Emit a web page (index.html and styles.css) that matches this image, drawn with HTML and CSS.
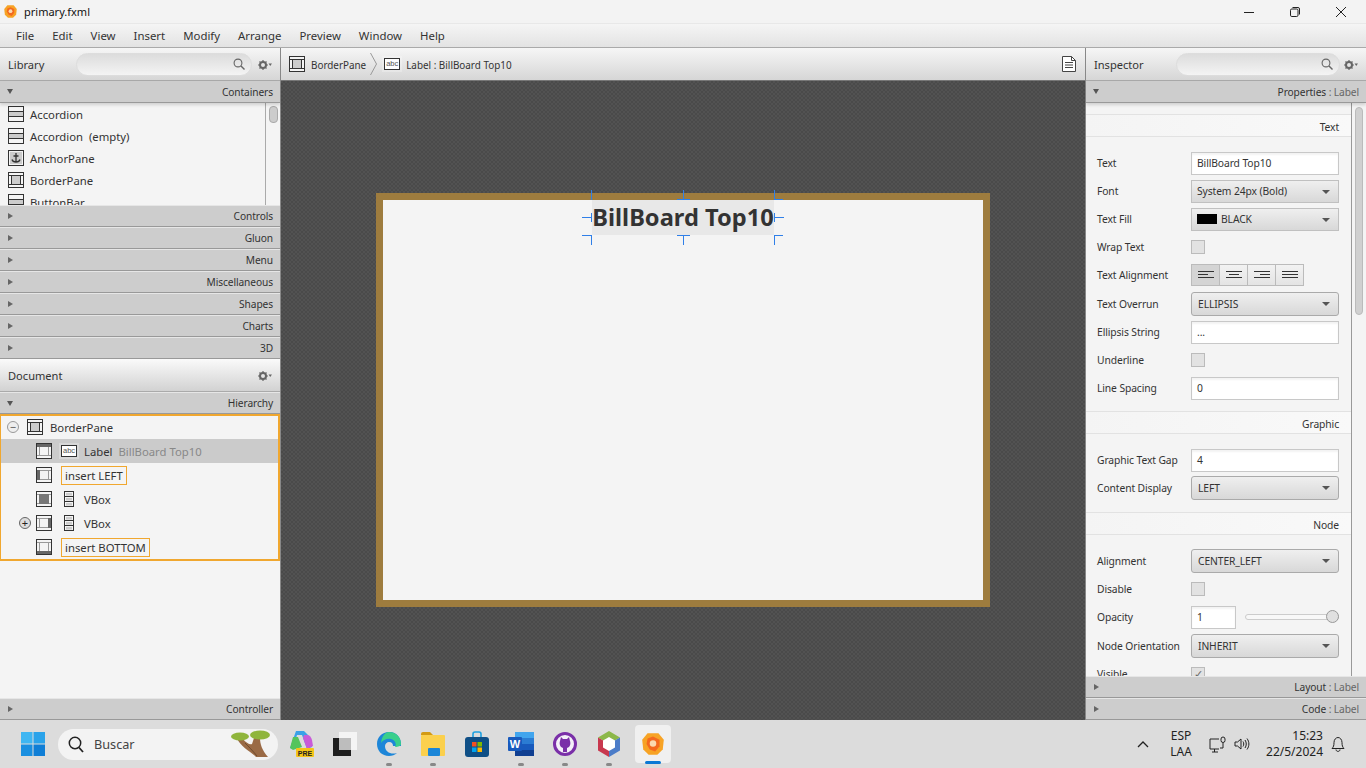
FILE: index.html
```html
<!DOCTYPE html>
<html lang="es">
<head>
    <meta charset="UTF-8">
    <title>primary.fxml</title>
    <link rel="stylesheet" href="styles.css">
</head>
<body>

    <svg class="defs" width="0" height="0">
        <symbol id="i-accordion" viewBox="0 0 16 16">
            <rect x="0.5" y="0.5" width="15" height="15" fill="#f4f4f4" stroke="#333"/>
            <path d="M1 5.5h14M1 10.5h14" stroke="#333" fill="none"/>
            <rect x="1" y="6" width="14" height="4" fill="#ccc"/>
        </symbol>
        <symbol id="i-anchor" viewBox="0 0 16 16">
            <rect x="0.5" y="0.5" width="15" height="15" fill="#f4f4f4" stroke="#333"/>
            <rect x="2" y="2" width="12" height="12" fill="#ccc"/>
            <path d="M8 3v9M5.500 6h5M4 9.500c.5 2 2 2.500 4 2.500s3.500-.5 4-2.500" stroke="#333" stroke-width="1.300" fill="none"/>
        </symbol>
        <symbol id="i-border" viewBox="0 0 16 16">
            <rect x="0.5" y="0.5" width="15" height="15" fill="#f4f4f4" stroke="#333"/>
            <path d="M1 3.500h14M1 12.500h14M3.500 3.500v9M12.500 3.500v9" stroke="#333" fill="none"/>
            <rect x="4" y="4" width="8" height="8" fill="#ccc"/>
        </symbol>
        <symbol id="i-top" viewBox="0 0 16 16">
            <rect x="0.5" y="0.5" width="15" height="15" fill="#f4f4f4" stroke="#333"/>
            <path d="M3.500 3.500v9M12.500 3.500v9M1 12.500h14" stroke="#999" fill="none"/>
            <rect x="1" y="1" width="14" height="3" fill="#666"/>
        </symbol>
        <symbol id="i-left" viewBox="0 0 16 16">
            <rect x="0.5" y="0.5" width="15" height="15" fill="#f4f4f4" stroke="#333"/>
            <path d="M1 3.500h14M1 12.500h14M12.500 3.500v9" stroke="#999" fill="none"/>
            <rect x="1" y="3" width="3" height="10" fill="#666"/>
        </symbol>
        <symbol id="i-center" viewBox="0 0 16 16">
            <rect x="0.5" y="0.5" width="15" height="15" fill="#f4f4f4" stroke="#333"/>
            <path d="M1 3.500h14M1 12.500h14M3.500 3.500v9M12.500 3.500v9" stroke="#999" fill="none"/>
            <rect x="3" y="3" width="10" height="10" fill="#777"/>
        </symbol>
        <symbol id="i-right" viewBox="0 0 16 16">
            <rect x="0.5" y="0.5" width="15" height="15" fill="#f4f4f4" stroke="#333"/>
            <path d="M1 3.500h14M1 12.500h14M3.500 3.500v9" stroke="#999" fill="none"/>
            <rect x="12" y="3" width="3" height="10" fill="#666"/>
        </symbol>
        <symbol id="i-bottom" viewBox="0 0 16 16">
            <rect x="0.5" y="0.5" width="15" height="15" fill="#f4f4f4" stroke="#333"/>
            <path d="M1 3.500h14M3.500 3.500v9M12.500 3.500v9" stroke="#999" fill="none"/>
            <rect x="1" y="12" width="14" height="3" fill="#666"/>
        </symbol>
        <symbol id="i-vbox" viewBox="0 0 10 16">
            <rect x="0.5" y="0.5" width="9" height="15" fill="#f4f4f4" stroke="#333"/>
            <path d="M1 5.500h8M1 10.500h8" stroke="#333" fill="none"/>
            <rect x="2" y="2" width="6" height="2.500" fill="#ccc"/>
            <rect x="2" y="7" width="6" height="2.500" fill="#ccc"/>
            <rect x="2" y="12" width="6" height="2.500" fill="#ccc"/>
        </symbol>
        <symbol id="i-gear" viewBox="0 0 14 10">
            <circle cx="5" cy="5" r="3" fill="none" stroke="#666" stroke-width="2"/>
            <path d="M5 0v2M5 8v2M0 5h2M8 5h2M1.500 1.500l1.400 1.400M7.100 7.100l1.400 1.400M1.500 8.500l1.400-1.400M7.100 2.900l1.400-1.400" stroke="#666" stroke-width="1.200"/>
            <path d="M10.500 3.500h3.500l-1.750 2.500z" fill="#666"/>
        </symbol>
        <symbol id="i-search" viewBox="0 0 12 12">
            <circle cx="5" cy="5" r="3.900" fill="none" stroke="#666" stroke-width="1.100"/>
            <path d="M8 8l3.500 3.500" stroke="#666" stroke-width="1.400"/>
        </symbol>
        <symbol id="i-abc" viewBox="0 0 16 12">
            <rect x="0.5" y="0.5" width="15" height="11" fill="#fff" stroke="#333"/>
        </symbol>
        <symbol id="i-builder" viewBox="0 0 24 24">
            <path d="M7 2h10l5 6-1 9-5 5H8l-5-5-1-9z" fill="#f7a325"/>
            <path d="M7 7l5-2 6 3 0 6-4 5-5-2-3-5z" fill="#f4691e"/>
            <circle cx="12" cy="11.500" r="3" fill="#fbd9b0"/>
        </symbol>
    </svg>

    <div class="titlebar">
        <svg class="title-logo"><use href="#i-builder"/></svg>
        <span class="title-name">primary.fxml</span>
        <div class="window-btns">
            <svg width="12" height="12" viewBox="0 0 12 12"><path d="M1 6.500h10" stroke="#222"/></svg>
            <svg width="12" height="12" viewBox="0 0 12 12"><rect x="1.500" y="3" width="7.500" height="7.500" rx="1.300" fill="none" stroke="#222"/><path d="M3.500 1.500h5.500a1.500 1.500 0 0 1 1.500 1.500v5.500" fill="none" stroke="#222"/></svg>
            <svg width="12" height="12" viewBox="0 0 12 12"><path d="M1 1l10 10M11 1L1 11" stroke="#222"/></svg>
        </div>
    </div>

    <div class="menubar">
        <span>File</span><span>Edit</span><span>View</span><span>Insert</span><span>Modify</span><span>Arrange</span><span>Preview</span><span>Window</span><span>Help</span>
    </div>

    <div class="workspace">

        <div class="side left-side">
            <div class="panel-head">
                <span class="panel-name">Library</span>
                <div class="search-field"><svg class="search-ico"><use href="#i-search"/></svg></div>
                <svg class="gear"><use href="#i-gear"/></svg>
            </div>
            <div class="pane-title open"><i class="arrow-down"></i><span>Containers</span></div>
            <div class="lib-list">
                <div class="lib-items">
                    <div class="lib-item"><svg class="ico"><use href="#i-accordion"/></svg>Accordion</div>
                    <div class="lib-item"><svg class="ico"><use href="#i-accordion"/></svg>Accordion&nbsp; (empty)</div>
                    <div class="lib-item"><svg class="ico"><use href="#i-anchor"/></svg>AnchorPane</div>
                    <div class="lib-item"><svg class="ico"><use href="#i-border"/></svg>BorderPane</div>
                    <div class="lib-item"><svg class="ico"><use href="#i-accordion"/></svg>ButtonBar</div>
                </div>
                <div class="lib-scroll"><div class="lib-thumb"></div></div>
            </div>
            <div class="pane-title"><i class="arrow-right"></i><span>Controls</span></div>
            <div class="pane-title"><i class="arrow-right"></i><span>Gluon</span></div>
            <div class="pane-title"><i class="arrow-right"></i><span>Menu</span></div>
            <div class="pane-title"><i class="arrow-right"></i><span>Miscellaneous</span></div>
            <div class="pane-title"><i class="arrow-right"></i><span>Shapes</span></div>
            <div class="pane-title"><i class="arrow-right"></i><span>Charts</span></div>
            <div class="pane-title"><i class="arrow-right"></i><span>3D</span></div>

            <div class="panel-head doc-head">
                <span class="panel-name">Document</span>
                <svg class="gear"><use href="#i-gear"/></svg>
            </div>
            <div class="pane-title"><i class="arrow-down"></i><span>Hierarchy</span></div>
            <div class="tree">
                <div class="tree-row root-row"><i class="toggle">&minus;</i><svg class="ico"><use href="#i-border"/></svg><span class="tree-text">BorderPane</span></div>
                <div class="tree-row selected"><i class="slot"></i><svg class="ico"><use href="#i-top"/></svg><span class="abc-ico"><svg class="abc-box" viewBox="0 0 16 12"><use href="#i-abc"/></svg><b>abc</b></span><span class="tree-text">Label</span><span class="tree-sub">BillBoard Top10</span></div>
                <div class="tree-row"><i class="slot"></i><svg class="ico"><use href="#i-left"/></svg><span class="insert">insert LEFT</span></div>
                <div class="tree-row"><i class="slot"></i><svg class="ico"><use href="#i-center"/></svg><svg class="vbox"><use href="#i-vbox"/></svg><span class="tree-text">VBox</span></div>
                <div class="tree-row"><i class="toggle plus">+</i><svg class="ico"><use href="#i-right"/></svg><svg class="vbox"><use href="#i-vbox"/></svg><span class="tree-text">VBox</span></div>
                <div class="tree-row"><i class="slot"></i><svg class="ico"><use href="#i-bottom"/></svg><span class="insert">insert BOTTOM</span></div>
            </div>
            <div class="side-fill"></div>
            <div class="pane-title"><i class="arrow-right"></i><span>Controller</span></div>
        </div>

        <div class="center">
            <div class="breadcrumb">
                <svg class="ico"><use href="#i-border"/></svg>
                <span class="crumb">BorderPane</span>
                <svg class="crumb-sep" width="7" height="24" viewBox="0 0 7 24"><path d="M.5 1l6 11-6 11" fill="none" stroke="#999"/></svg>
                <span class="abc-ico"><svg class="abc-box" viewBox="0 0 16 12"><use href="#i-abc"/></svg><b>abc</b></span>
                <span class="crumb">Label : BillBoard Top10</span>
                <svg class="doc-ico" width="14" height="16" viewBox="0 0 14 16"><path d="M.5.5h9l4 4v11H.5z" fill="#fff" stroke="#444"/><path d="M9.500.5v4h4M3 6.500h8M3 9h8M3 11.500h8" fill="none" stroke="#444"/></svg>
            </div>
            <div class="canvas">
                <div class="stage">
                    <div class="stage-inner">
                        <div class="stage-label">BillBoard Top10</div>
                        <svg class="handles" width="206" height="60" viewBox="0 0 206 60">
                            <path d="M11.500 2v10M103.500 2v9M97 11.500h13M194.500 2v10M194 11.500h9M2 29.500h10M11.500 25v9M194 29.500h10M194.500 25v9M2 47.500h10M11.500 47v10M97 47.500h13M103.500 47v10M194.500 47v10M194 47.500h9" fill="none" stroke="#2f7fe8"/>
                        </svg>
                    </div>
                </div>
            </div>
        </div>

        <div class="side right-side">
            <div class="panel-head">
                <span class="panel-name">Inspector</span>
                <div class="search-field insp-search"><svg class="search-ico"><use href="#i-search"/></svg></div>
                <svg class="gear"><use href="#i-gear"/></svg>
            </div>
            <div class="pane-title open"><i class="arrow-down"></i><span>Properties <em>: Label</em></span></div>
            <div class="insp-body">
                <div class="insp-scroll-area">
                    <div class="section-title first">Text</div>
                    <div class="prop-group">
                        <div class="prop"><label>Text</label><div class="field">BillBoard Top10</div></div>
                        <div class="prop"><label>Font</label><div class="combo flat">System 24px (Bold)</div></div>
                        <div class="prop"><label>Text Fill</label><div class="combo flat"><i class="swatch"></i>BLACK</div></div>
                        <div class="prop"><label>Wrap Text</label><i class="check"></i></div>
                        <div class="prop"><label>Text Alignment</label>
                            <div class="align-btns">
                                <div class="align-btn on"><svg width="16" height="8" viewBox="0 0 16 8"><path d="M0 .5h16M0 3.500h10M0 6.500h16" stroke="#333"/></svg></div>
                                <div class="align-btn"><svg width="16" height="8" viewBox="0 0 16 8"><path d="M0 .5h16M3 3.500h10M0 6.500h16" stroke="#333"/></svg></div>
                                <div class="align-btn"><svg width="16" height="8" viewBox="0 0 16 8"><path d="M0 .5h16M6 3.500h10M0 6.500h16" stroke="#333"/></svg></div>
                                <div class="align-btn"><svg width="16" height="8" viewBox="0 0 16 8"><path d="M0 .5h16M0 3.500h16M0 6.500h16" stroke="#333"/></svg></div>
                            </div>
                        </div>
                        <div class="prop shift"><label>Text Overrun</label><div class="combo">ELLIPSIS</div></div>
                        <div class="prop"><label>Ellipsis String</label><div class="field">...</div></div>
                        <div class="prop"><label>Underline</label><i class="check"></i></div>
                        <div class="prop"><label>Line Spacing</label><div class="field">0</div></div>
                    </div>
                    <div class="section-title">Graphic</div>
                    <div class="prop-group roomy">
                        <div class="prop"><label>Graphic Text Gap</label><div class="field">4</div></div>
                        <div class="prop"><label>Content Display</label><div class="combo">LEFT</div></div>
                    </div>
                    <div class="section-title">Node</div>
                    <div class="prop-group">
                        <div class="prop"><label>Alignment</label><div class="combo">CENTER_LEFT</div></div>
                        <div class="prop"><label>Disable</label><i class="check"></i></div>
                        <div class="prop"><label>Opacity</label><div class="field small">1</div><div class="slider"><i class="knob"></i></div></div>
                        <div class="prop shift"><label>Node Orientation</label><div class="combo">INHERIT</div></div>
                        <div class="prop"><label>Visible</label><i class="check checked">&#10003;</i></div>
                    </div>
                </div>
                <div class="insp-scroll"><div class="insp-thumb"></div></div>
            </div>
            <div class="pane-title"><i class="arrow-right"></i><span>Layout <em>: Label</em></span></div>
            <div class="pane-title"><i class="arrow-right"></i><span>Code <em>: Label</em></span></div>
        </div>
    </div>

    <div class="taskbar">
        <svg class="start" width="24" height="24" viewBox="0 0 24 24">
            <rect x="0" y="0" width="11.500" height="11.500" fill="#3fb6f2"/>
            <rect x="12.500" y="0" width="11.500" height="11.500" fill="#2aa3ea"/>
            <rect x="0" y="12.500" width="11.500" height="11.500" fill="#1a8fe0"/>
            <rect x="12.500" y="12.500" width="11.500" height="11.500" fill="#0f7ed6"/>
        </svg>
        <div class="task-search">
            <svg width="16" height="17" viewBox="0 0 16 17"><circle cx="7" cy="7" r="5.700" fill="none" stroke="#222" stroke-width="1.500"/><path d="M11 11.500l4 4.500" stroke="#222" stroke-width="1.800"/></svg>
            <span>Buscar</span>
            <svg class="search-tree" width="40" height="28" viewBox="0 0 40 28">
                <path d="M7 9h6c3 4 7 6 9 5l2-6h6c0 6 2 12 8 19H26C22 22 14 20 7 9z" fill="#9a6a45"/>
                <path d="M15 13c4 4 7 7 12 13" fill="none" stroke="#6e4a2e"/>
                <ellipse cx="10" cy="6.500" rx="9" ry="4" fill="#8fb53c"/>
                <ellipse cx="30" cy="5" rx="10" ry="4.500" fill="#8fb53c"/>
            </svg>
        </div>
        <div class="task-icons">
            <div class="task-ico">
                <svg width="26" height="28" viewBox="0 0 26 28"><path d="M8 1h8l4 4 4 12-5 2-5-14H9L5 19l-3-1z" fill="#3aa1e8"/><path d="M5 7l5 0 4 10-9 3-3-2z" fill="#54c45c"/><path d="M16 5h3c3 0 4 2 5 5l1 6-6 3-4-11z" fill="#c95bd8"/><rect x="8" y="18" width="18" height="9" rx="1" fill="#f5c518"/><text x="17" y="25.500" class="pre">PRE</text></svg>
            </div>
            <div class="task-ico">
                <svg width="24" height="24" viewBox="0 0 24 24"><rect x="6" y="0" width="18" height="18" fill="#f4f4f4"/><rect x="0" y="6" width="18" height="18" fill="#1e1e1e"/><rect x="6" y="6" width="12" height="12" fill="#bdbdbd"/></svg>
            </div>
            <div class="task-ico dot">
                <svg width="26" height="26" viewBox="0 0 26 26"><path d="M13 1C6 1 1 6 1 13c0 7 5 12 12 12 3 0 6-1 8-3-6 2-12-1-12-7 0-2 2-4 4-4 3 0 4 2 4 4h8c1-8-5-14-11-14z" fill="#1d86d8"/><path d="M13 1c6 0 12 4 12 12 0 2-3 3-6 3 2-3 0-7-4-8-4-1-8 1-10 4C6 5 9 1 13 1z" fill="#39cf8b"/></svg>
            </div>
            <div class="task-ico dot">
                <svg width="26" height="24" viewBox="0 0 26 24"><path d="M1 2a2 2 0 0 1 2-2h7l3 3h-12z" fill="#d39a14"/><rect x="1" y="3" width="24" height="21" rx="1" fill="#fbd04d"/><rect x="8" y="16" width="12" height="8" rx="1" fill="#1b86d8"/></svg>
            </div>
            <div class="task-ico">
                <svg width="24" height="26" viewBox="0 0 24 26"><path d="M8 6V3a2 2 0 0 1 2-2h4a2 2 0 0 1 2 2v3" fill="none" stroke="#1da0e0" stroke-width="1.600"/><rect x="0" y="6" width="24" height="20" rx="3" fill="#0f4f86"/><rect x="7" y="11" width="4.500" height="4.500" fill="#f25022"/><rect x="12.500" y="11" width="4.500" height="4.500" fill="#7fba00"/><rect x="7" y="16.500" width="4.500" height="4.500" fill="#00a4ef"/><rect x="12.500" y="16.500" width="4.500" height="4.500" fill="#ffb900"/></svg>
            </div>
            <div class="task-ico dot">
                <svg width="26" height="24" viewBox="0 0 26 24"><rect x="7" y="0" width="19" height="24" rx="1" fill="#2b7cd3"/><rect x="7" y="0" width="19" height="6" fill="#41a5ee"/><rect x="7" y="12" width="19" height="6" fill="#185abd"/><rect x="7" y="18" width="19" height="6" fill="#103f91"/><rect x="0" y="5" width="14" height="14" rx="1" fill="#185abd"/><text x="7" y="16" class="word">W</text></svg>
            </div>
            <div class="task-ico dot">
                <svg width="24" height="26" viewBox="0 0 24 26"><circle cx="12" cy="13" r="10.500" fill="#f4f0f8" stroke="#7a2fa8" stroke-width="3"/><path d="M8 6l2 2h4l2-2 1 4c1 3 0 6-3 7v4h-4v-4c-3-1-4-4-3-7z" fill="#7a2fa8"/></svg>
            </div>
            <div class="task-ico dot">
                <svg width="24" height="26" viewBox="0 0 24 26"><path d="M12 0l11 6.500-11 6.500L1 6.500z" fill="#8cb84a"/><path d="M1 6.500v13L12 26V13z" fill="#c8384e"/><path d="M23 6.500v13L12 26V13z" fill="#4b7cc8"/><path d="M12 6l6 3.500v7L12 20l-6-3.500v-7z" fill="#fff"/></svg>
            </div>
            <div class="task-ico active">
                <svg width="26" height="28" viewBox="0 0 24 24"><use href="#i-builder"/></svg>
            </div>
        </div>
        <div class="tray">
            <svg class="tray-up" width="12" height="7" viewBox="0 0 12 7"><path d="M1 6l5-5 5 5" fill="none" stroke="#222" stroke-width="1.300"/></svg>
            <div class="lang">ESP<br>LAA</div>
            <svg class="tray-net" width="17" height="17" viewBox="0 0 17 17"><path d="M10 3H1v10h9M5.500 13v3M3 16h6" fill="none" stroke="#222"/><rect x="12" y="1" width="4" height="5.500" rx="2" fill="none" stroke="#222"/><path d="M14 7v5h-3" fill="none" stroke="#222"/></svg>
            <svg class="tray-vol" width="17" height="14" viewBox="0 0 17 14"><path d="M1 5h2.500L7 2v10L3.500 9H1z" fill="none" stroke="#222"/><path d="M9 4.500c1 1.500 1 3.500 0 5M11 3c1.700 2.500 1.700 5.500 0 8M13 1.500c2.500 3.500 2.500 7.500 0 11" fill="none" stroke="#222"/></svg>
            <div class="clock">15:23<br>22/5/2024</div>
            <svg class="tray-bell" width="14" height="16" viewBox="0 0 14 16"><path d="M1 12.500h12c-1.500-1.500-2-3-2-6 0-3-2-5-4-5s-4 2-4 5c0 3-.5 4.500-2 6zM5 13.500c0 2.500 4 2.500 4 0" fill="none" stroke="#222"/></svg>
        </div>
    </div>

</body>
</html>
```

FILE: styles.css
```css
body {
    margin: 0;
    width: 1366px;
    height: 768px;
    overflow: hidden;
    display: flex;
    flex-direction: column;
    font-family: "Noto Sans", sans-serif;
    font-size: 11.3px;
    color: #333;
    background-color: #f4f4f4;
}

.defs {
    position: absolute;
}

.titlebar {
    height: 24px;
    display: flex;
    align-items: center;
    background-color: #f3f3f3;
    border-bottom: 1px solid #e8e8e8;
    box-sizing: border-box;
    color: #111;
}

.title-logo {
    width: 15px;
    height: 15px;
    margin-left: 3px;
}

.title-name {
    margin-left: 6px;
    font-size: 11px;
}

.window-btns {
    margin-left: auto;
    display: flex;
    gap: 34px;
    padding-right: 19px;
}

.menubar {
    height: 24px;
    box-sizing: border-box;
    display: flex;
    align-items: center;
    gap: 18px;
    padding-left: 16px;
    background: linear-gradient(#f5f5f5, #e3e3e3);
    border-bottom: 1px solid #aaa;
    font-size: 11.4px;
}

.workspace {
    flex: 1;
    display: flex;
    min-height: 0;
}

.side {
    width: 281px;
    flex: none;
    display: flex;
    flex-direction: column;
    box-sizing: border-box;
    background-color: #f4f4f4;
}

.left-side {
    border-right: 1px solid #888;
}

.right-side {
    width: 280px;
}

.panel-head {
    height: 33px;
    flex: none;
    box-sizing: border-box;
    display: flex;
    align-items: center;
    padding-left: 8px;
    background: linear-gradient(#f6f6f6, #d6d6d6);
    border-bottom: 1px solid #aaa;
    position: relative;
}

.panel-name {
    font-size: 11.1px;
}

.search-field {
    position: absolute;
    left: 76px;
    top: 5px;
    width: 176px;
    height: 23px;
    box-sizing: border-box;
    border: 1px solid #ddd;
    border-radius: 12px;
    background: linear-gradient(#dcdcdc, #f4f4f4);
}

.insp-search {
    left: 90px;
    width: 164px;
}

.search-ico {
    position: absolute;
    right: 6px;
    top: 4px;
    width: 12px;
    height: 12px;
}

.gear {
    position: absolute;
    right: 8px;
    top: 12px;
    width: 14px;
    height: 10px;
}

.doc-head {
    background: linear-gradient(#fafafa, #d2d2d2);
}

.pane-title {
    height: 22px;
    flex: none;
    box-sizing: border-box;
    display: flex;
    align-items: center;
    justify-content: space-between;
    padding: 0 7px 0 7px;
    background-color: #cdcdcd;
    border-top: 1px solid #e6e6e6;
    border-bottom: 1px solid #999;
    font-size: 10.2px;
    letter-spacing: -0.1px;
}

.pane-title.open {
    box-shadow: 0 2px 3px rgba(0, 0, 0, 0.15);
    position: relative;
    border-top: none;
}

.pane-title em {
    font-style: normal;
    color: #666;
}

.arrow-down {
    width: 0;
    height: 0;
    border-left: 3.500px solid transparent;
    border-right: 3.500px solid transparent;
    border-top: 5px solid #555;
}

.arrow-right {
    width: 0;
    height: 0;
    margin-left: 1px;
    border-top: 3.500px solid transparent;
    border-bottom: 3.500px solid transparent;
    border-left: 5px solid #666;
}

.lib-list {
    height: 102px;
    flex: none;
    display: flex;
    overflow: hidden;
}

.lib-items {
    flex: 1;
    overflow: hidden;
    padding-left: 8px;
}

.lib-item {
    height: 22px;
    display: flex;
    align-items: center;
    gap: 6px;
}

.ico {
    width: 16px;
    height: 16px;
    flex: none;
}

.lib-scroll {
    width: 15px;
    flex: none;
    box-sizing: border-box;
    border-left: 1px solid #aaa;
    padding: 3px 0 0 3px;
}

.lib-thumb {
    width: 9px;
    height: 17px;
    box-sizing: border-box;
    border: 1px solid #aaa;
    border-radius: 4px;
    background-color: #ccc;
}

.tree {
    height: 147px;
    flex: none;
    box-sizing: border-box;
    border: 2px solid #f0a72f;
    border-left-width: 1px;
}

.tree-row {
    height: 24px;
    display: flex;
    align-items: center;
    padding-left: 18px;
}

.root-row {
    margin-top: -1px;
    padding-left: 6px;
}

.root-row .ico {
    margin-left: 8px;
}

.slot {
    width: 17px;
    flex: none;
}

.toggle {
    width: 12px;
    height: 12px;
    flex: none;
    box-sizing: border-box;
    border: 1px solid #999;
    border-radius: 50%;
    font-style: normal;
    font-size: 11px;
    line-height: 10px;
    text-align: center;
    color: #555;
    background-color: #eee;
}

.toggle.plus {
    margin-right: 5px;
    background-color: #ddd;
    border-color: #666;
    color: #222;
}

.tree-text {
    margin-left: 7px;
}

.vbox {
    width: 10px;
    height: 16px;
    margin-left: 12px;
    flex: none;
}

.vbox + .tree-text {
    margin-left: 10px;
}

.tree-row.selected {
    background-color: #cbcbcb;
}

.abc-ico {
    position: relative;
    width: 16px;
    height: 12px;
    flex: none;
    display: inline-block;
    box-shadow: 0 0 0 2px rgba(255, 255, 255, 0.25);
}

.selected .abc-ico {
    margin-left: 9px;
}

.abc-box {
    position: absolute;
    left: 0;
    top: 0;
    width: 16px;
    height: 12px;
}

.abc-ico b {
    position: absolute;
    left: 2px;
    top: 1px;
    font-weight: normal;
    font-family: "Liberation Sans", sans-serif;
    font-size: 7.500px;
    line-height: 10px;
    color: #555;
}

.tree-sub {
    margin-left: 6px;
    color: #888;
}

.insert {
    margin-left: 9px;
    height: 19px;
    box-sizing: border-box;
    border: 1px solid #f0a72f;
    padding: 0 3px;
    line-height: 17px;
}

.side-fill {
    flex: 1;
}

.center {
    flex: 1;
    min-width: 0;
    display: flex;
    flex-direction: column;
    border-right: 1px solid #888;
}

.breadcrumb {
    height: 33px;
    flex: none;
    box-sizing: border-box;
    display: flex;
    align-items: center;
    padding: 0 9px 0 8px;
    background: linear-gradient(#f6f6f6, #d6d6d6);
    border-bottom: 1px solid #777;
    font-size: 9.900px;
}

.crumb {
    margin-left: 6px;
    padding-top: 1px;
}

.crumb-sep {
    margin: 0 7px 0 4px;
}

.doc-ico {
    margin-left: auto;
}

.canvas {
    flex: 1;
    display: flex;
    align-items: center;
    justify-content: center;
    background-color: #4d4d4d;
    background-image: conic-gradient(#4a4a4a 25%, #525252 0 50%, #4a4a4a 0 75%, #525252 0);
    background-size: 4px 4px;
}

.stage {
    width: 614px;
    height: 414px;
    box-sizing: border-box;
    margin-bottom: 1px;
    border: 7px solid #9e7c3e;
}

.stage-inner {
    height: 100%;
    background-color: #f4f4f4;
    display: flex;
    justify-content: center;
    position: relative;
}

.stage-label {
    width: 182px;
    height: 35px;
    background-color: #e8e8e8;
    font-weight: bold;
    font-size: 23.650px;
    line-height: 35px;
    text-align: center;
    white-space: nowrap;
    color: #333;
}

.handles {
    position: absolute;
    left: 197px;
    top: -12px;
}

.insp-body {
    flex: 1;
    min-height: 0;
    display: flex;
    overflow: hidden;
    font-size: 10.300px;
    letter-spacing: -0.1px;
}

.insp-scroll-area {
    flex: 1;
    min-width: 0;
    overflow: hidden;
    padding-top: 11px;
}

.section-title {
    height: 23px;
    box-sizing: border-box;
    padding-right: 12px;
    line-height: 24px;
    text-align: right;
    background: linear-gradient(to right, #f4f4f4, #f9f9f9);
    border-top: 1px solid #e2e2e2;
    border-bottom: 1px solid #e2e2e2;
}

.prop-group {
    padding: 12px 0 9px;
}

.prop-group.roomy {
    padding-bottom: 10px;
}

.prop {
    height: 28px;
    display: flex;
    align-items: center;
    padding-left: 11px;
}

.prop.shift {
    margin-top: 1px;
}

.prop label {
    width: 94px;
    flex: none;
    white-space: nowrap;
}

.field {
    width: 148px;
    height: 23px;
    box-sizing: border-box;
    border: 1px solid #c8c8c8;
    padding-left: 5px;
    line-height: 21px;
    background-color: #fff;
    box-shadow: inset 0 2px 2px rgba(0, 0, 0, 0.05);
}

.field.small {
    width: 45px;
}

.combo {
    width: 148px;
    height: 24px;
    box-sizing: border-box;
    border: 1px solid #aaa;
    border-radius: 3px;
    padding-left: 6px;
    display: flex;
    align-items: center;
    background: linear-gradient(#efefef, #d8d8d8);
    position: relative;
}

.combo::after {
    content: "";
    position: absolute;
    right: 8px;
    top: 9px;
    border-left: 4px solid transparent;
    border-right: 4px solid transparent;
    border-top: 4px solid #555;
}

.combo.flat {
    height: 23px;
    border-radius: 0;
    border-color: #c0c0c0;
    padding-left: 5px;
}

.swatch {
    width: 20px;
    height: 10px;
    margin-right: 4px;
    background-color: #000;
}

.check {
    width: 14px;
    height: 14px;
    box-sizing: border-box;
    border: 1px solid #bbb;
    background-color: #e2e2e2;
    font-style: normal;
    font-size: 11px;
    line-height: 12px;
    text-align: center;
    color: #666;
}

.align-btns {
    display: flex;
}

.align-btn {
    width: 29px;
    height: 22px;
    box-sizing: border-box;
    border: 1px solid #bbb;
    margin-left: -1px;
    display: flex;
    align-items: center;
    justify-content: center;
    background: linear-gradient(#f2f2f2, #e4e4e4);
}

.align-btn:first-child {
    margin-left: 0;
}

.align-btn.on {
    background: #d4d4d4;
}

.slider {
    width: 94px;
    height: 6px;
    box-sizing: border-box;
    margin-left: 9px;
    border: 1px solid #ccc;
    border-radius: 3px;
    background-color: #f8f8f8;
    position: relative;
}

.knob {
    position: absolute;
    right: -1px;
    top: -5px;
    width: 13px;
    height: 13px;
    box-sizing: border-box;
    border: 1px solid #999;
    border-radius: 50%;
    background-color: #e0e0e0;
}

.insp-scroll {
    width: 15px;
    flex: none;
    box-sizing: border-box;
    border-left: 1px solid #999;
    padding: 4px 0 0 3px;
}

.insp-thumb {
    width: 8px;
    height: 208px;
    box-sizing: border-box;
    border: 1px solid #bbb;
    border-radius: 4px;
    background-color: #d0d0d0;
}

.taskbar {
    height: 48px;
    flex: none;
    display: flex;
    align-items: center;
    background-color: #dcdcdc;
    font-size: 12px;
    color: #222;
}

.start {
    margin-left: 21px;
}

.task-search {
    width: 220px;
    height: 31px;
    margin-left: 13px;
    box-sizing: border-box;
    border-radius: 16px;
    background-color: #f3f3f3;
    display: flex;
    align-items: center;
    padding-left: 10px;
    position: relative;
    font-size: 12.700px;
    color: #444;
}

.task-search span {
    margin-left: 10px;
}

.search-tree {
    position: absolute;
    right: 8px;
    top: 1px;
}

.task-icons {
    display: flex;
    margin-left: 1px;
}

.task-ico {
    width: 44px;
    height: 38px;
    display: flex;
    align-items: center;
    justify-content: center;
    position: relative;
}

.task-ico.dot::after {
    content: "";
    position: absolute;
    bottom: -3px;
    left: 19px;
    width: 6px;
    height: 3px;
    border-radius: 2px;
    background-color: #888;
}

.task-ico.active {
    width: 36px;
    margin-left: 4px;
    background-color: #f0f0f0;
    border-radius: 4px;
}

.task-ico.active::after {
    content: "";
    position: absolute;
    bottom: -1px;
    left: 10px;
    width: 16px;
    height: 3px;
    border-radius: 2px;
    background-color: #0a78d4;
}

.pre {
    font-family: "Liberation Sans", sans-serif;
    font-weight: bold;
    font-size: 7px;
    text-anchor: middle;
    fill: #222;
}

.word {
    font-family: "Liberation Sans", sans-serif;
    font-weight: bold;
    font-size: 11px;
    text-anchor: middle;
    fill: #fff;
}

.tray {
    margin-left: auto;
    display: flex;
    align-items: center;
    padding-right: 21px;
}

.tray-up {
    margin-right: 17px;
}

.lang {
    width: 30px;
    text-align: center;
    line-height: 16px;
}

.tray-net {
    margin-left: 13px;
}

.tray-vol {
    margin-left: 8px;
}

.clock {
    width: 64px;
    margin-left: 8px;
    text-align: right;
    line-height: 16px;
    white-space: nowrap;
}

.tray-bell {
    margin-left: 8px;
}
```
